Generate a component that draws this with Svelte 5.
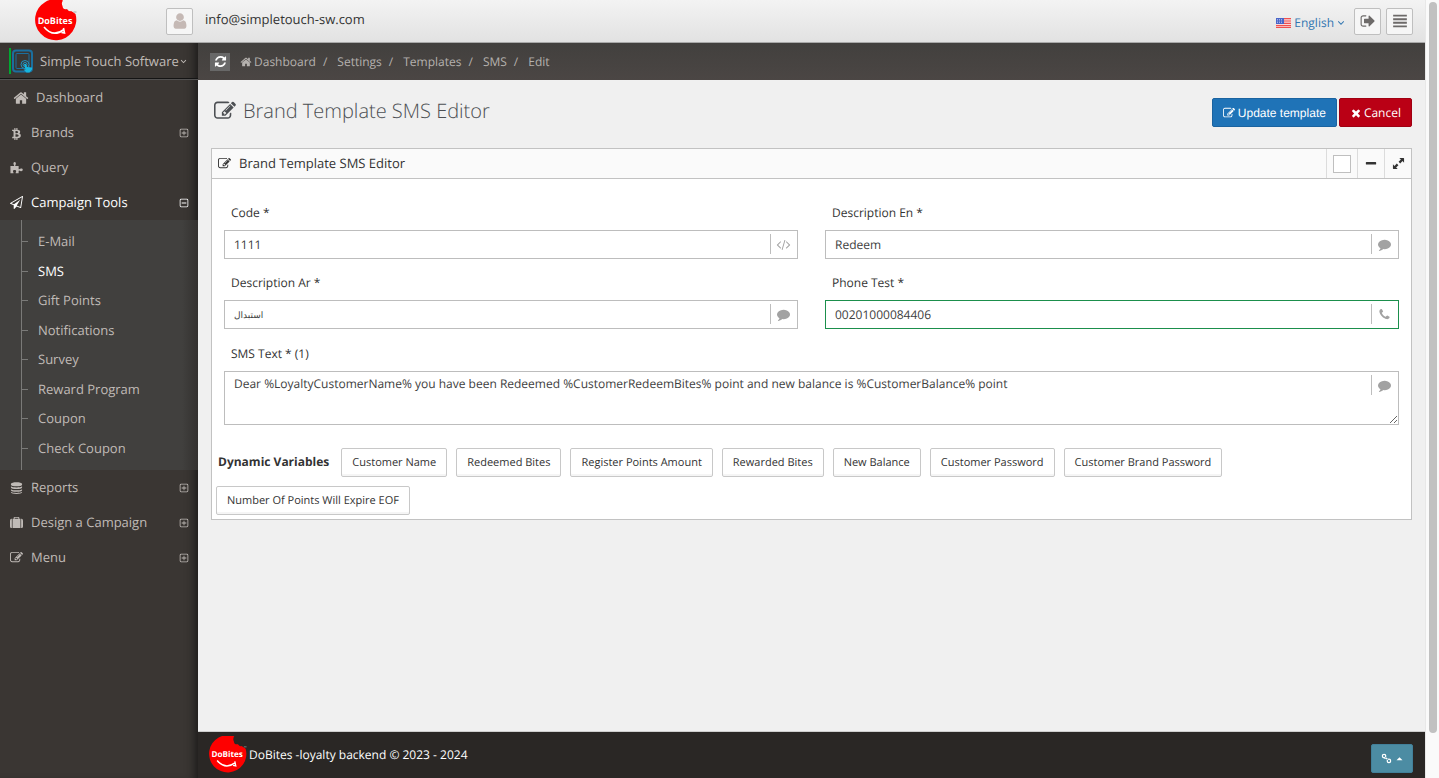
<script>
    const icons = {
        edit: "M888 1184l116-116-152-152-116 116v56h96v96h56zm440-720q-16-16-33 1l-350 350q-17 17-1 33t33-1l350-350q17-17 1-33zm80 594v190q0 119-84.5 203.5t-203.5 84.5h-832q-119 0-203.5-84.5t-84.5-203.5v-832q0-119 84.5-203.5t203.5-84.5h832q63 0 117 25 15 7 18 23 3 17-9 29l-49 49q-14 14-32 8-23-6-45-6h-832q-66 0-113 47t-47 113v832q0 66 47 113t113 47h832q66 0 113-47t47-113v-126q0-13 9-22l64-64q15-15 35-7t20 29zm-96-738l288 288-672 672h-288v-288zm444 132l-92 92-288-288 92-92q28-28 68-28t68 28l152 152q28 28 28 68t-28 68z",
        home: "M1472 992v480q0 26-19 45t-45 19h-384v-384h-256v384h-384q-26 0-45-19t-19-45v-480q0-1 .5-3t.5-3l575-474 575 474q1 2 1 6zm223-69l-62 74q-8 9-21 11h-3q-13 0-21-7l-692-577-692 577q-12 8-24 7-13-2-21-11l-62-74q-8-10-7-23.5t11-21.5l719-599q32-26 76-26t76 26l244 204v-195q0-14 9-23t23-9h192q14 0 23 9t9 23v408l219 182q10 8 11 21.5t-7 23.5z",
        refresh: "M1639 1056q0 5-1 7-64 268-268 434.5t-478 166.5q-146 0-282.5-55t-243.5-157l-129 129q-19 19-45 19t-45-19-19-45v-448q0-26 19-45t45-19h448q26 0 45 19t19 45-19 45l-137 137q71 66 161 102t187 36q134 0 250-65t186-179q11-17 53-117 8-23 30-23h192q13 0 22.5 9.5t9.5 22.5zm25-800v448q0 26-19 45t-45 19h-448q-26 0-45-19t-19-45 19-45l138-138q-148-137-349-137-134 0-250 65t-186 179q-11 17-53 117-8 23-30 23h-199q-13 0-22.5-9.5t-9.5-22.5v-7q65-268 270-434.5t480-166.5q146 0 284 55.5t245 156.5l130-129q19-19 45-19t45 19 19 45z",
        times: "M1490 1322q0 40-28 68l-136 136q-28 28-68 28t-68-28l-294-294-294 294q-28 28-68 28t-68-28l-136-136q-28-28-28-68t28-68l294-294-294-294q-28-28-28-68t28-68l136-136q28-28 68-28t68 28l294 294 294-294q28-28 68-28t68 28l136 136q28 28 28 68t-28 68l-294 294 294 294q28 28 28 68z",
        signOut: "M704 1440q0 4 1 20t.5 26.5-3 23.5-10 19.5-20.5 6.5h-320q-119 0-203.5-84.5t-84.5-203.5v-704q0-119 84.5-203.5t203.5-84.5h320q13 0 22.5 9.5t9.5 22.5q0 4 1 20t.5 26.5-3 23.5-10 19.5-20.5 6.5h-320q-66 0-113 47t-47 113v704q0 66 47 113t113 47h312l11.5 1 11.5 3 8 5.5 7 9 2 13.5zm928-544q0 26-19 45l-544 544q-19 19-45 19t-45-19-19-45v-288h-448q-26 0-45-19t-19-45v-384q0-26 19-45t45-19h448v-288q0-26 19-45t45-19 45 19l544 544q19 19 19 45z",
        justify: "M128 192h1536v210h-1536zM128 592h1536v210h-1536zM128 992h1536v210h-1536zM128 1392h1536v210h-1536z",
        user: "M1536 1399q0 109-62.5 187t-150.5 78h-854q-88 0-150.5-78t-62.5-187q0-85 8.5-160.5t31.5-152 58.5-131 94-89 134.5-34.5q131 128 313 128t313-128q76 0 134.5 34.5t94 89 58.5 131 31.5 152 8.5 160.5zm-256-887q0 159-112.5 271.5t-271.5 112.5-271.5-112.5-112.5-271.5 112.5-271.5 271.5-112.5 271.5 112.5 112.5 271.5z",
        comment: "M1792 896q0 174-120 321.5t-326 233-450 85.5q-70 0-145-8-198 175-460 242-49 14-114 22-17 2-30.5-9t-17.5-29v-1q-3-4-.5-12t2-10 4.5-9.5l6-9 7-8.5 8-9q7-8 31-34.5t34.5-38 31-39.5 32.5-51 27-59 26-76q-157-89-247.5-220t-90.5-281q0-130 71-248.5t191-204.5 286-136.5 348-50.5q244 0 450 85.5t326 233 120 321.5z",
        phone: "M1600 1240q0 27-10 70.5t-21 68.5q-21 50-122 106-94 51-186 51-27 0-53-3.5t-57.5-12.5-47-14.5-55.5-20.5-49-18q-98-35-175-83-127-79-264-216t-216-264q-48-77-83-175-3-9-18-49t-20.5-55.5-14.5-47-12.5-57.5-3.5-53q0-92 51-186 56-101 106-122 25-11 68.5-21t70.5-10q14 0 21 3 18 6 53 76 11 19 30 54t35 63.5 31 53.5q3 4 17.5 25t21.5 35.5 7 28.5q0 20-28.5 50t-62 55-62 53-28.5 46q0 9 5 22.5t8.5 20.5 14 24 11.5 19q76 137 174 235t235 174q2 1 19 11.5t24 14 20.5 8.5 22.5 5q18 0 46-28.5t53-62 55-62 50-28.5q14 0 28.5 7t35.5 21.5 25 17.5q25 15 53.5 31t63.5 35 54 30q70 35 76 53 3 7 3 21z",
        code: "M553 1399l-50 50q-10 10-23 10t-23-10l-466-466q-10-10-10-23t10-23l466-466q10-10 23-10t23 10l50 50q10 10 10 23t-10 23l-393 393 393 393q10 10 10 23t-10 23zm591-1067l-373 1291q-4 13-15.5 19.5t-23.5 2.5l-62-17q-13-4-19.5-15.5t-2.5-24.5l373-1291q4-13 15.5-19.5t23.5-2.5l62 17q13 4 19.5 15.5t2.5 24.5zm657 651l-466 466q-10 10-23 10t-23-10l-50-50q-10-10-10-23t10-23l393-393-393-393q-10-10-10-23t10-23l50-50q10-10 23-10t23 10l466 466q10 10 10 23t-10 23z",
        plane: "M1764 11q33 24 27 64l-256 1536q-5 29-32 45-14 8-31 8-11 0-24-5l-527-215-298 327q-18 21-47 21-14 0-23-4-19-7-30-23.5t-11-36.5v-452l-472-193q-37-14-40-55-3-39 32-59l1664-960q35-21 68 2zm-342 1499l221-1323-1434 827 336 137 863-639-478 797z",
        bitcoin: "M1399 776q18 182-131 258 117 28 175 103t45 214q-7 71-32.5 125t-64.5 89-97 58.5-121.5 34.5-145.5 15v255h-154v-251q-80 0-122-1v252h-154v-255q-18 0-54-.5t-55-.5h-200l31-183h111q50 0 58-51v-402h16q-6-1-16-1v-287q-13-68-89-68h-111v-164l212 1q64 0 97-1v-252h154v247q82-2 122-2v-245h154v252q79 7 140 22.5t113 45 82.5 78 36.5 114.5zm-215 545q0-36-15-64t-37-46-57.5-30.5-65.5-18.5-74-9-69-3-64.5 1-47.5 1v338q8 0 37 .5t48 .5 53-1.5 58.5-4 57-8.5 55.5-14 47.5-21 39.5-30 24.5-40 9.5-51zm-71-476q0-33-12.5-58.5t-30.5-42-48-28-55-16.5-61.5-8-58-2.5-54 1-39.5.5v307q5 0 34.5.5t46.5 0 50-2 55-5.5 51.5-11 48.5-18.5 37-27 27-38.5 9-51z",
        puzzle: "M60 700H500C640 700 540 560 500 470C440 300 500 150 640 150C790 150 850 300 790 470C750 570 650 700 800 700H1190V1060C1190 1200 1340 1100 1420 1060C1600 980 1760 1060 1760 1210C1760 1370 1600 1440 1420 1370C1320 1330 1190 1250 1190 1400V1700H790C750 1620 850 1540 850 1430C850 1300 760 1230 630 1230C500 1230 410 1300 410 1430C410 1540 520 1620 480 1700H60Z",
        database: "M128 384C128 80 1664 80 1664 384V520C1664 800 128 800 128 520ZM128 740C350 960 1442 960 1664 740V900C1664 1180 128 1180 128 900ZM128 1120C350 1340 1442 1340 1664 1120V1280C1664 1560 128 1560 128 1280ZM128 1480C350 1700 1442 1700 1664 1480V1560C1664 1860 128 1860 128 1560Z",
        suitcase: "M0 640Q0 384 200 384H256V1664H200Q0 1664 0 1440ZM352 384H512V220Q512 128 610 128H1182Q1280 128 1280 220V384H1440V1664H352ZM640 256V384H1152V256ZM1536 384H1592Q1792 384 1792 640V1440Q1792 1664 1592 1664H1536Z",
        plus: "M384 128H1408Q1664 128 1664 384V1408Q1664 1664 1408 1664H384Q128 1664 128 1408V384Q128 128 384 128ZM400 272Q272 272 272 400V1392Q272 1520 400 1520H1392Q1520 1520 1520 1392V400Q1520 272 1392 272ZM828 480H964V828H1312V964H964V1312H828V964H480V828H828Z",
        minus: "M384 128H1408Q1664 128 1664 384V1408Q1664 1664 1408 1664H384Q128 1664 128 1408V384Q128 128 384 128ZM400 272Q272 272 272 400V1392Q272 1520 400 1520H1392Q1520 1520 1520 1392V400Q1520 272 1392 272ZM480 828H1312V964H480Z",
        bar: "M220 604H1572Q1664 604 1664 696V896Q1664 988 1572 988H220Q128 988 128 896V696Q128 604 220 604Z",
        expand: "M1010 128H1600Q1664 128 1664 192V782L1450 568L1130 888L904 662L1224 342ZM782 1664H192Q128 1664 128 1600V1010L342 1224L662 904L888 1130L568 1450Z",
        angle: "M200 620L340 460L896 1016L1452 460L1592 620L896 1320Z",
        link: "M500 128A380 380 0 1 0 500 888A380 380 0 1 0 500 128ZM500 330A178 178 0 1 1 500 686A178 178 0 1 1 500 330ZM1292 904A380 380 0 1 0 1292 1664A380 380 0 1 0 1292 904ZM1292 1106A178 178 0 1 1 1292 1462A178 178 0 1 1 1292 1106ZM640 780L780 640L1160 1010L1020 1150Z",
        caret: "M128 1316L896 548L1664 1316Z",
    };

    const tools = [
        "E-Mail",
        "SMS",
        "Gift Points",
        "Notifications",
        "Survey",
        "Reward Program",
        "Coupon",
        "Check Coupon",
    ];

    const menu = [
        { label: "Dashboard", icon: "home", wide: true },
        { label: "Brands", icon: "bitcoin", toggle: "plus" },
        { label: "Query", icon: "puzzle" },
        { label: "Campaign Tools", icon: "plane", toggle: "minus", children: tools },
        { label: "Reports", icon: "database", toggle: "plus" },
        { label: "Design a Campaign", icon: "suitcase", toggle: "plus" },
        { label: "Menu", icon: "edit", toggle: "plus" },
    ];

    const crumbs = ["Dashboard", "Settings", "Templates", "SMS", "Edit"];

    const variables = [
        ["Customer Name", "%LoyaltyCustomerName%"],
        ["Redeemed Bites", "%CustomerRedeemBites%"],
        ["Register Points Amount", "%RegisterPoints%"],
        ["Rewarded Bites", "%CustomerRewardBites%"],
        ["New Balance", "%CustomerBalance%"],
        ["Customer Password", "%CustomerPassword%"],
        ["Customer Brand Password", "%CustomerBrandPassword%"],
        ["Number Of Points Will Expire EOF", "%ExpirePoints%"],
    ];

    let fields = $state([
        { id: "code", label: "Code *", value: "1111", icon: "code" },
        { id: "description-en", label: "Description En *", value: "Redeem", icon: "comment" },
        { id: "description-ar", label: "Description Ar *", value: "استبدال", icon: "comment", lang: "ar" },
        { id: "phone", label: "Phone Test *", value: "00201000084406", icon: "phone", valid: true },
    ]);

    let smsText = $state(
        "Dear %LoyaltyCustomerName% you have been Redeemed %CustomerRedeemBites% point and new balance is %CustomerBalance% point",
    );
    let smsCount = $derived(Math.max(1, Math.ceil(smsText.length / 160)));

    function addVariable(token) {
        smsText += " " + token;
    }
</script>

{#snippet icon(name, size = 14)}
    <svg class="icon" width={size} height={size} viewBox="0 0 1792 1792" aria-hidden="true">
        <path fill-rule="evenodd" d={icons[name]} />
    </svg>
{/snippet}

{#snippet logo(size)}
    <svg class="logo" width={size} height={size} viewBox="0 0 42 42" role="img" aria-label="DoBites">
        <path
            fill="#fe0000"
            d="M28 0.4A20.6 20.6 0 1 0 40.500 14Q38 12 36 11Q34 12 32 9Q28 10 27.500 6Q26 3 28 0.400Z"
        />
        <text x="20" y="23.500" text-anchor="middle">DoBites</text>
        <path fill="none" stroke="#fff" stroke-width="1.600" d="M9 27Q18 38 29 29.500M28.500 28l1 5l-3-0.500" />
        <path stroke="#999" stroke-width="0.800" d="M38.500 12h3" />
    </svg>
{/snippet}

<div class="page">
    <div class="app">
        <header class="header">
            <a class="brand" href="#home">{@render logo(42)}</a>
            <div class="account">
                <span class="square avatar">{@render icon("user", 18)}</span>
                <span class="email">info@simpletouch-sw.com</span>
            </div>
            <a class="language" href="#language">
                <svg width="15" height="10" viewBox="0 0 15 10" aria-hidden="true">
                    <path fill="#fbd9d9" d="M0 0h15v10H0z" />
                    <path stroke="#f0504f" stroke-width="1.200" d="M0 .6h15M0 3h15M0 5.400h15M0 7.600h15M0 9.600h15" />
                    <path fill="#4a66c8" d="M0 0h8v6H0z" />
                    <path stroke="#b8c4ee" stroke-width=".8" stroke-dasharray="1 1" d="M1 1.500h6M1 3h6M1 4.500h6" />
                </svg>
                English
                {@render icon("angle", 8)}
            </a>
            <button class="square" type="button" aria-label="Sign out">{@render icon("signOut", 16)}</button>
            <button class="square" type="button" aria-label="Collapse menu">{@render icon("justify", 16)}</button>
        </header>

        <div class="columns">
            <aside class="sidebar">
                <a class="company" href="#company">
                    <svg class="company-logo" width="24" height="26" viewBox="0 0 24 26" aria-hidden="true">
                        <path fill="#00a831" d="M0 0h2v26H0z" />
                        <rect x="4" y="2.500" width="19" height="21" rx="3" fill="none" stroke="#1b6f9e" stroke-width="2" />
                        <rect x="7" y="5.500" width="13" height="15" rx="1" fill="none" stroke="#1b6f9e" />
                        <circle cx="16" cy="16.500" r="4" fill="#3a3633" stroke="#2092c0" />
                        <circle cx="16" cy="16.500" r="2" fill="none" stroke="#2092c0" />
                        <path fill="#17b5dd" d="M15 16l2 0 1 3 5 0.500 0 2-2.500 3h-3l-3-3 2 0z" />
                    </svg>
                    <span>Simple Touch Software</span>
                    {@render icon("angle", 7)}
                </a>
                <nav>
                    {#each menu as item}
                        <a class="nav-item" class:wide={item.wide} class:open={item.children} href="#menu">
                            <span class="nav-icon">{@render icon(item.icon, item.wide ? 16 : 13)}</span>
                            <span class="nav-label">{item.label}</span>
                            {#if item.toggle}{@render icon(item.toggle, 10)}{/if}
                        </a>
                        {#if item.children}
                            <ul class="submenu">
                                {#each item.children as child}
                                    <li><a class:active={child === "SMS"} href="#menu">{child}</a></li>
                                {/each}
                            </ul>
                        {/if}
                    {/each}
                </nav>
            </aside>

            <div class="main">
                <div class="ribbon">
                    <button class="refresh" type="button" aria-label="Refresh">{@render icon("refresh", 13)}</button>
                    <ol class="crumbs">
                        {#each crumbs as crumb, i}
                            <li>
                                {#if i === 0}{@render icon("home", 12)}{/if}
                                <a href="#crumb">{crumb}</a>
                            </li>
                        {/each}
                    </ol>
                </div>

                <main class="content">
                    <div class="title-row">
                        <h1>{@render icon("edit", 22)}Brand Template SMS Editor</h1>
                        <div class="actions">
                            <button class="btn update" type="button">{@render icon("edit", 12)} Update template</button>
                            <button class="btn cancel" type="button">{@render icon("times", 12)} Cancel</button>
                        </div>
                    </div>

                    <section class="widget">
                        <div class="widget-head">
                            {@render icon("edit", 13)}
                            <h2>Brand Template SMS Editor</h2>
                            <button class="color" type="button" aria-label="Widget colour"><span></span></button>
                            <button type="button" aria-label="Collapse">{@render icon("bar", 12)}</button>
                            <button type="button" aria-label="Fullscreen">{@render icon("expand", 13)}</button>
                        </div>

                        <form class="form">
                            <div class="fields">
                                {#each fields as field}
                                    <div class="field">
                                        <label for={field.id}>{field.label}</label>
                                        <div class="control">
                                            <input
                                                id={field.id}
                                                type="text"
                                                lang={field.lang}
                                                class:valid={field.valid}
                                                class:arabic={field.lang === "ar"}
                                                bind:value={field.value}
                                            />
                                            <span class="append">{@render icon(field.icon, 13)}</span>
                                        </div>
                                    </div>
                                {/each}
                            </div>
                            <div class="field message">
                                <label for="sms-text">SMS Text * ({smsCount})</label>
                                <div class="control">
                                    <textarea id="sms-text" spellcheck="false" bind:value={smsText}></textarea>
                                    <span class="append">{@render icon("comment", 13)}</span>
                                </div>
                            </div>
                        </form>

                        <div class="variables">
                            <strong>Dynamic Variables</strong>
                            {#each variables as [label, token]}
                                <button type="button" onclick={() => addVariable(token)}>{label}</button>
                            {/each}
                        </div>
                    </section>
                </main>

                <footer class="footer">
                    {@render logo(38)}
                    <span>DoBites -loyalty backend © 2023 - 2024</span>
                    <button type="button" aria-label="Links">{@render icon("link", 11)}{@render icon("caret", 7)}</button>
                </footer>
            </div>
        </div>
    </div>
    <div class="scrollbar"><div class="thumb"></div></div>
</div>

<style>
    :global(body) {
        background: #fff;
    }

    .page {
        display: flex;
        min-height: 100vh;
        font-family: "Open Sans", "DejaVu Sans", sans-serif;
        font-size: 13px;
        line-height: 18px;
        text-rendering: geometricPrecision;
        color: #333;
    }

    .page * {
        box-sizing: border-box;
    }

    .icon {
        flex: none;
        fill: currentColor;
        overflow: visible;
    }

    a {
        color: inherit;
        text-decoration: none;
    }

    button {
        display: inline-flex;
        align-items: center;
        justify-content: center;
        padding: 0;
        font: inherit;
        text-rendering: inherit;
        cursor: pointer;
    }

    .app {
        display: flex;
        flex: 1;
        flex-direction: column;
        min-width: 0;
    }

    .scrollbar {
        width: 14px;
        padding: 2px 1px 0 3px;
        background: #fafafa;
        border-left: 1px solid #e8e8e8;
    }

    .thumb {
        width: 8px;
        height: 94vh;
        border-radius: 4px;
        background: #c1c1c1;
    }

    .header {
        display: flex;
        align-items: center;
        gap: 5px;
        height: 43px;
        padding-right: 12px;
        border-bottom: 1px solid #a9a9a9;
        background: linear-gradient(#f3f3f3, #e2e2e2);
    }

    .brand {
        display: flex;
        width: 161px;
        padding-left: 35px;
    }

    .logo {
        flex: none;
    }

    .logo text {
        fill: #fff;
        font-family: "Open Sans", sans-serif;
        font-size: 9px;
        font-weight: 700;
    }

    .account {
        display: flex;
        flex: 1;
        gap: 12px;
    }

    .email {
        line-height: 23px;
    }

    .square {
        display: flex;
        align-items: center;
        justify-content: center;
        width: 27px;
        height: 27px;
        border: 1px solid #bfbfbf;
        border-radius: 2px;
        background: #f6f6f6;
        color: #6d6a69;
    }

    .avatar {
        color: #c5b9b5;
    }

    .language {
        display: flex;
        align-items: center;
        gap: 3px;
        padding: 3px 4px 0 0;
        font-size: 12px;
        color: #3276b1;
    }

    .columns {
        display: flex;
        flex: 1;
    }

    .sidebar {
        width: 198px;
        flex: none;
        background: #3a3633;
        box-shadow: inset -10px 0 12px -9px #111;
        color: #c0bbb7;
    }

    .company {
        display: flex;
        align-items: center;
        height: 37px;
        padding-left: 9px;
        border-bottom: 1px solid #525151;
        box-shadow: inset 0 -1px #141414;
    }

    .company span {
        margin: 0 1px 0 7px;
    }

    .nav-item {
        display: flex;
        align-items: center;
        height: 35px;
        padding: 0 9px 0 10px;
    }

    .nav-icon {
        display: flex;
        width: 21px;
    }

    .wide .nav-icon {
        width: 23px;
        margin-left: 3px;
    }

    .nav-label {
        flex: 1;
        padding-bottom: 1px;
    }

    .open {
        color: #fff;
    }

    .submenu {
        display: flex;
        flex-direction: column;
        height: 250px;
        margin: 0;
        padding: 7px 0 7px 21px;
        list-style: none;
        background:
            linear-gradient(#7a7a78, #7a7a78) 21px 0 / 1px 100% no-repeat,
            linear-gradient(to right, #41403e 182px, #33312f);
    }

    .submenu li {
        display: flex;
        flex: 1;
        align-items: center;
        gap: 10px;
    }

    .submenu li::before {
        width: 7px;
        height: 1px;
        background: #7a7a78;
        content: "";
    }

    .submenu a {
        padding-bottom: 1px;
    }

    .active {
        color: #fff;
    }

    .main {
        display: flex;
        flex: 1;
        flex-direction: column;
        min-width: 0;
        background: #f0f0f0;
    }

    .ribbon {
        display: flex;
        align-items: center;
        gap: 10px;
        height: 37px;
        padding-left: 12px;
        background: linear-gradient(#42403e, #4b4644);
        font-size: 12px;
        color: #b5b1ae;
    }

    .refresh {
        width: 20px;
        height: 18px;
        border: 0;
        background: #686868;
        color: #fff;
    }

    .crumbs {
        display: flex;
        margin: 0;
        padding: 0;
        list-style: none;
    }

    .crumbs li {
        display: flex;
        align-items: center;
        gap: 2px;
    }

    .crumbs li + li::before {
        padding: 0 8px 0 7px;
        content: "/";
    }

    .content {
        flex: 1;
        padding: 0 13px;
    }

    .title-row {
        display: flex;
        align-items: flex-start;
        justify-content: space-between;
        padding: 18px 0 21px;
    }

    h1 {
        display: flex;
        align-items: center;
        gap: 7px;
        height: 26px;
        margin: 0;
        padding-left: 3px;
        font-size: 20px;
        font-weight: 300;
        line-height: 26px;
        color: #4c4f53;
    }

    .actions {
        display: flex;
        gap: 2px;
    }

    .btn {
        gap: 3px;
        height: 29px;
        padding: 0 10px;
        border: 1px solid;
        border-radius: 2px;
        font-size: 12px;
        color: #fff;
    }

    .update {
        border-color: #1a63a0;
        background: #1f73b7;
        font-family: "Liberation Sans", sans-serif;
    }

    .cancel {
        gap: 2px;
        border-color: #a00012;
        background: #ba0015;
    }

    .widget {
        border: 1px solid #c2c2c2;
        background: #fff;
    }

    .widget-head {
        display: flex;
        align-items: center;
        height: 30px;
        padding-left: 6px;
        border-bottom: 1px solid #c2c2c2;
        background: #fafafa;
    }

    h2 {
        flex: 1;
        margin: 0 0 0 8px;
        padding-bottom: 1px;
        font-size: 13px;
        font-weight: 400;
    }

    .widget-head button {
        width: 27px;
        height: 29px;
        border: 0;
        border-left: 1px solid #dcdcdc;
        background: none;
        color: #333;
    }

    .widget-head .color {
        width: 31px;
    }

    .color span {
        width: 18px;
        height: 18px;
        border: 1px solid #bfbfbf;
        background: #fff;
    }

    .form {
        padding: 25px 12px 23px;
        font-size: 12px;
    }

    .fields {
        display: grid;
        grid-template-columns: 1fr 1fr;
        gap: 15px 27px;
    }

    .message {
        margin-top: 16px;
    }

    .field label {
        display: block;
        margin: 0 0 8px 7px;
    }

    .control {
        position: relative;
        display: flex;
    }

    input,
    textarea {
        width: 100%;
        height: 29px;
        margin: 0;
        padding: 0 36px 0 9px;
        border: 1px solid #bdbdbd;
        border-radius: 0;
        background: #fff;
        font: inherit;
        text-rendering: inherit;
        color: #404040;
        outline: 0;
    }

    textarea {
        height: 54px;
        padding-top: 3px;
        resize: vertical;
    }

    .arabic {
        font-size: 9px;
    }

    .valid {
        border-color: #1b8f4c;
    }

    .append {
        position: absolute;
        top: 4px;
        right: 1px;
        display: flex;
        align-items: center;
        justify-content: center;
        width: 27px;
        height: 20px;
        padding-right: 2px;
        border-left: 1px solid #bdbdbd;
        color: #a2a2a2;
        pointer-events: none;
    }

    .variables {
        display: flex;
        flex-wrap: wrap;
        align-items: center;
        gap: 9px;
        padding: 0 4px 4px;
        font-size: 12px;
    }

    .variables strong {
        margin: 0 3px 0 2px;
        padding-bottom: 2px;
    }

    .variables button {
        height: 29px;
        padding: 0 10px;
        border: 1px solid #c8c8c8;
        border-radius: 2px;
        background: #fff;
        box-shadow: inset 0 -2px #f5f5f5;
        font-size: 11px;
        color: #333;
    }

    .footer {
        display: flex;
        align-items: center;
        gap: 2px;
        height: 47px;
        padding: 0 12px 0 11px;
        border-top: 1px solid #cecece;
        background: #2a2725;
        font-size: 12px;
        color: #fff;
    }

    .footer span {
        flex: 1;
    }

    .footer button {
        gap: 4px;
        width: 42px;
        height: 29px;
        margin-top: 6px;
        border: 1px solid #42809a;
        border-radius: 2px;
        background: #4c8ca3;
        color: #fff;
    }
</style>
